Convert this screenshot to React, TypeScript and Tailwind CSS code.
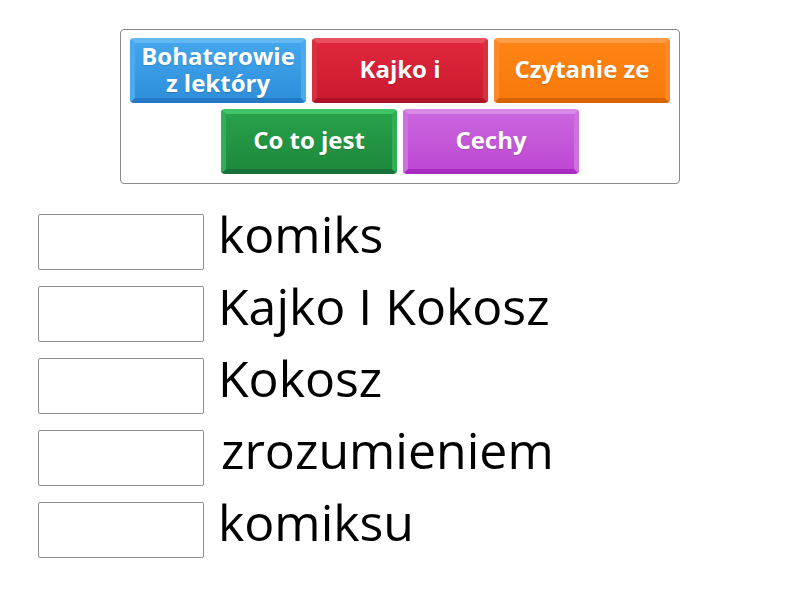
const tiles = [
  { label: 'Bohaterowie z lektóry', face: 'bg-gradient-to-b from-[#43a6ec] to-[#2e8fdb]', edge: 'border-t-[#62b9f3] border-x-[#4aaaee] border-b-[#2479c4]' },
  { label: 'Kajko i', face: 'bg-gradient-to-b from-[#e0263c] to-[#cc1a30]', edge: 'border-t-[#e8505f] border-x-[#d8303f] border-b-[#ad1428]' },
  { label: 'Czytanie ze', face: 'bg-gradient-to-b from-[#ff8414] to-[#f77a0a]', edge: 'border-t-[#ff9c45] border-x-[#fb8a2a] border-b-[#d86400]' },
  { label: 'Co to jest', face: 'bg-gradient-to-b from-[#28a04a] to-[#1e8a3d]', edge: 'border-t-[#3fc466] border-x-[#2fae55] border-b-[#17733a]' },
  { label: 'Cechy', face: 'bg-gradient-to-b from-[#c964dd] to-[#bf48d4]', edge: 'border-t-[#d98ae6] border-x-[#cf70e0] border-b-[#a62dc0]' },
];

const answers = ['komiks', 'Kajko I Kokosz', 'Kokosz', 'zrozumieniem', 'komiksu'];

function Tile({ label, face, edge }: { label: string; face: string; edge: string }) {
  return (
    <div className={`w-[176px] h-[65px] rounded-[4px] border-[5px] ${edge} ${face} flex items-center justify-center px-1 pb-[4px]`}>
      <span className="text-white font-bold text-[24px] leading-[27px] text-center [text-shadow:0_1px_1px_rgba(0,0,0,0.15)]">
        {label}
      </span>
    </div>
  );
}

export default function App() {
  return (
    <div className="w-[800px] h-[600px] bg-white font-['Open_Sans',sans-serif]">
      <div className="pt-[29px] flex justify-center">
        <div className="w-[560px] h-[155px] border border-[#8a8a8a] rounded-[4px] px-[8px] pt-[8px] flex flex-wrap justify-center content-start gap-x-[6px] gap-y-[6px]">
          {tiles.map((t) => (
            <Tile key={t.label} {...t} />
          ))}
        </div>
      </div>

      <div className="mt-[30px] pl-[38px] flex flex-col gap-[17px]">
        {answers.map((a) => (
          <div key={a} className="flex items-start h-[55px]">
            <div className="w-[166px] h-[56px] border border-[#8c8c8c] rounded-[2px] bg-white shrink-0" />
            <span className={`text-[50px] leading-[50px] -mt-[5px] text-black whitespace-nowrap ${a === 'zrozumieniem' ? 'ml-[17px]' : 'ml-[14px]'}`}>
              {a}
            </span>
          </div>
        ))}
      </div>
    </div>
  );
}
